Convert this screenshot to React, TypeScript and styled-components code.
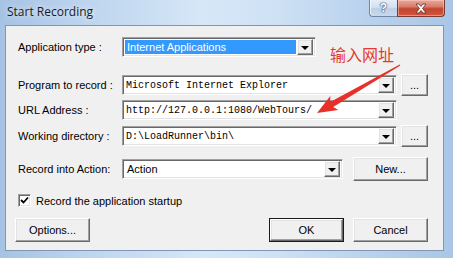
import React from 'react';
import styled, { createGlobalStyle, css } from 'styled-components';

const Global = createGlobalStyle`
  html, body { margin: 0; padding: 0; }
  body {
    width: 453px;
    height: 258px;
    overflow: hidden;
    background: #bcd4ee;
    font-family: "Liberation Sans", Arial, sans-serif;
  }
`;

const Window = styled.div`
  position: relative;
  width: 453px;
  height: 258px;
  box-sizing: border-box;
  display: flex;
  flex-direction: column;
  background: linear-gradient(90deg, #a6c3e4 0%, #bcd4ee 18%, #d6e7f7 45%, #cfe2f5 60%, #b8d1ec 82%, #aac6e6 100%);
  overflow: hidden;
`;

const TitleBar = styled.div`
  height: 25px;
  display: flex;
  align-items: flex-start;
  justify-content: space-between;
  flex-shrink: 0;
`;

const TitleText = styled.div`
  margin: 4px 0 0 7px;
  font-family: "Open Sans", "Noto Sans", sans-serif;
  font-size: 12px;
  line-height: 16px;
  color: #1b1b1b;
  text-shadow: 0 0 6px rgba(255, 255, 255, 0.9);
`;

const CaptionButtons = styled.div`
  display: flex;
  margin-right: 8px;
`;

const HelpButton = styled.div`
  width: 28px;
  height: 17px;
  box-sizing: border-box;
  border: 1px solid #6d86a6;
  border-top: none;
  border-right: none;
  border-bottom-left-radius: 4px;
  background: linear-gradient(180deg, #e6eef8 0%, #d3e0ef 45%, #bccfe6 55%, #c9daee 100%);
  box-shadow: inset 1px 0 0 rgba(255, 255, 255, 0.7);
  display: flex;
  align-items: center;
  justify-content: center;
  font-family: "Liberation Sans", Arial, sans-serif;
  font-size: 12px;
  font-weight: bold;
  color: #ffffff;
  text-shadow: 0 0 1px #3d526e, 0 0 1px #3d526e, 0 0 2px #3d526e;
`;

const CloseButton = styled.div`
  width: 48px;
  height: 17px;
  box-sizing: border-box;
  border: 1px solid #7a3b33;
  border-top: none;
  border-bottom-right-radius: 4px;
  background: linear-gradient(180deg, #e9a99b 0%, #d87f6d 40%, #c4452f 55%, #d2553c 100%);
  box-shadow: inset 0 0 0 1px rgba(255, 210, 200, 0.5);
  display: flex;
  align-items: center;
  justify-content: center;
`;

const Client = styled.div`
  flex: 1;
  margin: 0 9px 7px 5px;
  border: 1px solid #7f97b4;
  background: #f0f0f0;
  display: flex;
  flex-direction: column;
  padding: 11px 15px 0 12px;
  font-size: 11px;
  color: #000;
`;

const Row = styled.div<{ $mt: number; $h: number }>`
  display: flex;
  align-items: center;
  height: ${(p) => p.$h}px;
  margin-top: ${(p) => p.$mt}px;
`;

const Label = styled.div`
  width: 104px;
  flex-shrink: 0;
  font-size: 11px;
  line-height: 13px;
  white-space: nowrap;
`;

const sunken = css`
  box-sizing: border-box;
  border: 1px solid;
  border-color: #a0a0a0 #ffffff #ffffff #a0a0a0;
  box-shadow: inset 1px 1px 0 #696969, inset -1px -1px 0 #e3e3e3;
`;

const raised = css`
  box-sizing: border-box;
  border: 1px solid;
  border-color: #ffffff #696969 #696969 #ffffff;
  box-shadow: inset -1px -1px 0 #a0a0a0, inset 1px 1px 0 #e3e3e3;
  background: #f0f0f0;
`;

const Combo = styled.div<{ $w: number }>`
  ${sunken};
  width: ${(p) => p.$w}px;
  height: 20px;
  background: #fff;
  display: flex;
  align-items: center;
  padding: 2px 2px 2px 2px;
  flex-shrink: 0;
`;

const ComboText = styled.div<{ $mono?: boolean; $selected?: boolean }>`
  flex: 1;
  height: 100%;
  display: flex;
  align-items: center;
  padding-left: ${(p) => (p.$mono ? 1 : 2)}px;
  white-space: nowrap;
  overflow: hidden;
  font-family: ${(p) => (p.$mono ? '"Liberation Mono", "Courier New", monospace' : '"Liberation Sans", Arial, sans-serif')};
  font-size: ${(p) => (p.$mono ? 10 : 11)}px;
  color: ${(p) => (p.$selected ? '#ffffff' : '#000000')};
  background: ${(p) => (p.$selected ? '#3399ff' : 'transparent')};
  margin-right: ${(p) => (p.$selected ? 1 : 0)}px;
`;

const DropButton = styled.div`
  ${raised};
  width: 16px;
  height: 16px;
  flex-shrink: 0;
  display: flex;
  align-items: center;
  justify-content: center;
`;

const Arrow = styled.div`
  width: 0;
  height: 0;
  border-left: 4px solid transparent;
  border-right: 4px solid transparent;
  border-top: 4px solid #000;
  margin-top: 1px;
`;

const PushButton = styled.div<{ $w: number; $h: number; $default?: boolean }>`
  ${raised};
  width: ${(p) => p.$w}px;
  height: ${(p) => p.$h}px;
  flex-shrink: 0;
  display: flex;
  align-items: center;
  justify-content: center;
  font-size: 11px;
  color: #000;
  ${(p) =>
    p.$default &&
    css`
      outline: 1px solid #1a1a1a;
      outline-offset: -1px;
      border-width: 2px;
      border-color: #ffffff #696969 #696969 #ffffff;
    `}
`;

const Spacer = styled.div<{ $w: number }>`
  width: ${(p) => p.$w}px;
  flex-shrink: 0;
`;

const CheckRow = styled.div`
  display: flex;
  align-items: center;
  height: 13px;
  margin-top: 13px;
  gap: 5px;
  font-size: 11px;
`;

const CheckBox = styled.div`
  ${sunken};
  width: 13px;
  height: 13px;
  background: #fff;
  display: flex;
  align-items: center;
  justify-content: center;
`;

const ButtonRow = styled.div`
  display: flex;
  align-items: center;
  justify-content: space-between;
  height: 24px;
  margin-top: 11px;
  margin-left: -3px;
`;

const ButtonGroup = styled.div`
  display: flex;
  gap: 9px;
`;

const Overlay = styled.svg`
  position: absolute;
  left: 0;
  top: 0;
  width: 453px;
  height: 258px;
  pointer-events: none;
`;

const Note = styled.div`
  position: absolute;
  left: 330px;
  top: 44px;
  font-family: "Noto Sans CJK SC", "Noto Sans", sans-serif;
  font-size: 16px;
  line-height: 20px;
  color: #e3392f;
`;

const DropDown: React.FC = () => (
  <DropButton>
    <Arrow />
  </DropButton>
);

export default function App() {
  return (
    <>
      <Global />
      <Window>
        <TitleBar>
          <TitleText>Start Recording</TitleText>
          <CaptionButtons>
            <HelpButton>?</HelpButton>
            <CloseButton>
              <svg width="14" height="11" viewBox="0 0 14 11">
                <path
                  d="M2 1 L5 1 L7 3.5 L9 1 L12 1 L8.6 5.5 L12 10 L9 10 L7 7.5 L5 10 L2 10 L5.4 5.5 Z"
                  fill="#ffffff"
                  stroke="#5a2a22"
                  strokeWidth="0.8"
                  strokeLinejoin="round"
                />
              </svg>
            </CloseButton>
          </CaptionButtons>
        </TitleBar>
        <Client>
          <Row $mt={0} $h={20}>
            <Label>Application type :</Label>
            <Combo $w={194}>
              <ComboText $selected>Internet Applications</ComboText>
              <DropDown />
            </Combo>
          </Row>
          <Row $mt={17} $h={22}>
            <Label>Program to record :</Label>
            <Combo $w={275}>
              <ComboText $mono>Microsoft Internet Explorer</ComboText>
              <DropDown />
            </Combo>
            <Spacer $w={4} />
            <PushButton $w={27} $h={22}>...</PushButton>
          </Row>
          <Row $mt={4} $h={20}>
            <Label>URL Address :</Label>
            <Combo $w={275}>
              <ComboText $mono>http://127.0.0.1:1080/WebTours/</ComboText>
              <DropDown />
            </Combo>
          </Row>
          <Row $mt={5} $h={22}>
            <Label>Working directory :</Label>
            <Combo $w={275}>
              <ComboText $mono>D:\LoadRunner\bin\</ComboText>
              <DropDown />
            </Combo>
            <Spacer $w={4} />
            <PushButton $w={27} $h={22}>...</PushButton>
          </Row>
          <Row $mt={10} $h={24}>
            <Label>Record into Action:</Label>
            <Combo $w={221}>
              <ComboText>Action</ComboText>
              <DropDown />
            </Combo>
            <Spacer $w={10} />
            <PushButton $w={75} $h={24}>New...</PushButton>
          </Row>
          <CheckRow>
            <CheckBox>
              <svg width="9" height="9" viewBox="0 0 9 9">
                <path d="M1 4 L3.5 6.5 L8 1.5" fill="none" stroke="#000" strokeWidth="1.8" />
              </svg>
            </CheckBox>
            <span>Record the application startup</span>
          </CheckRow>
          <ButtonRow>
            <PushButton $w={75} $h={24}>Options...</PushButton>
            <ButtonGroup>
              <PushButton $w={75} $h={24} $default>OK</PushButton>
              <PushButton $w={75} $h={24}>Cancel</PushButton>
            </ButtonGroup>
          </ButtonRow>
        </Client>
        <Note>输入网址</Note>
        <Overlay viewBox="0 0 453 258">
          <polygon
            points="400.3,65.4 333.2,107.1 338.3,109.9 317,113 330.3,96.1 330.2,101.9 399.7,64.6"
            fill="#e8302a"
          />
        </Overlay>
      </Window>
    </>
  );
}
